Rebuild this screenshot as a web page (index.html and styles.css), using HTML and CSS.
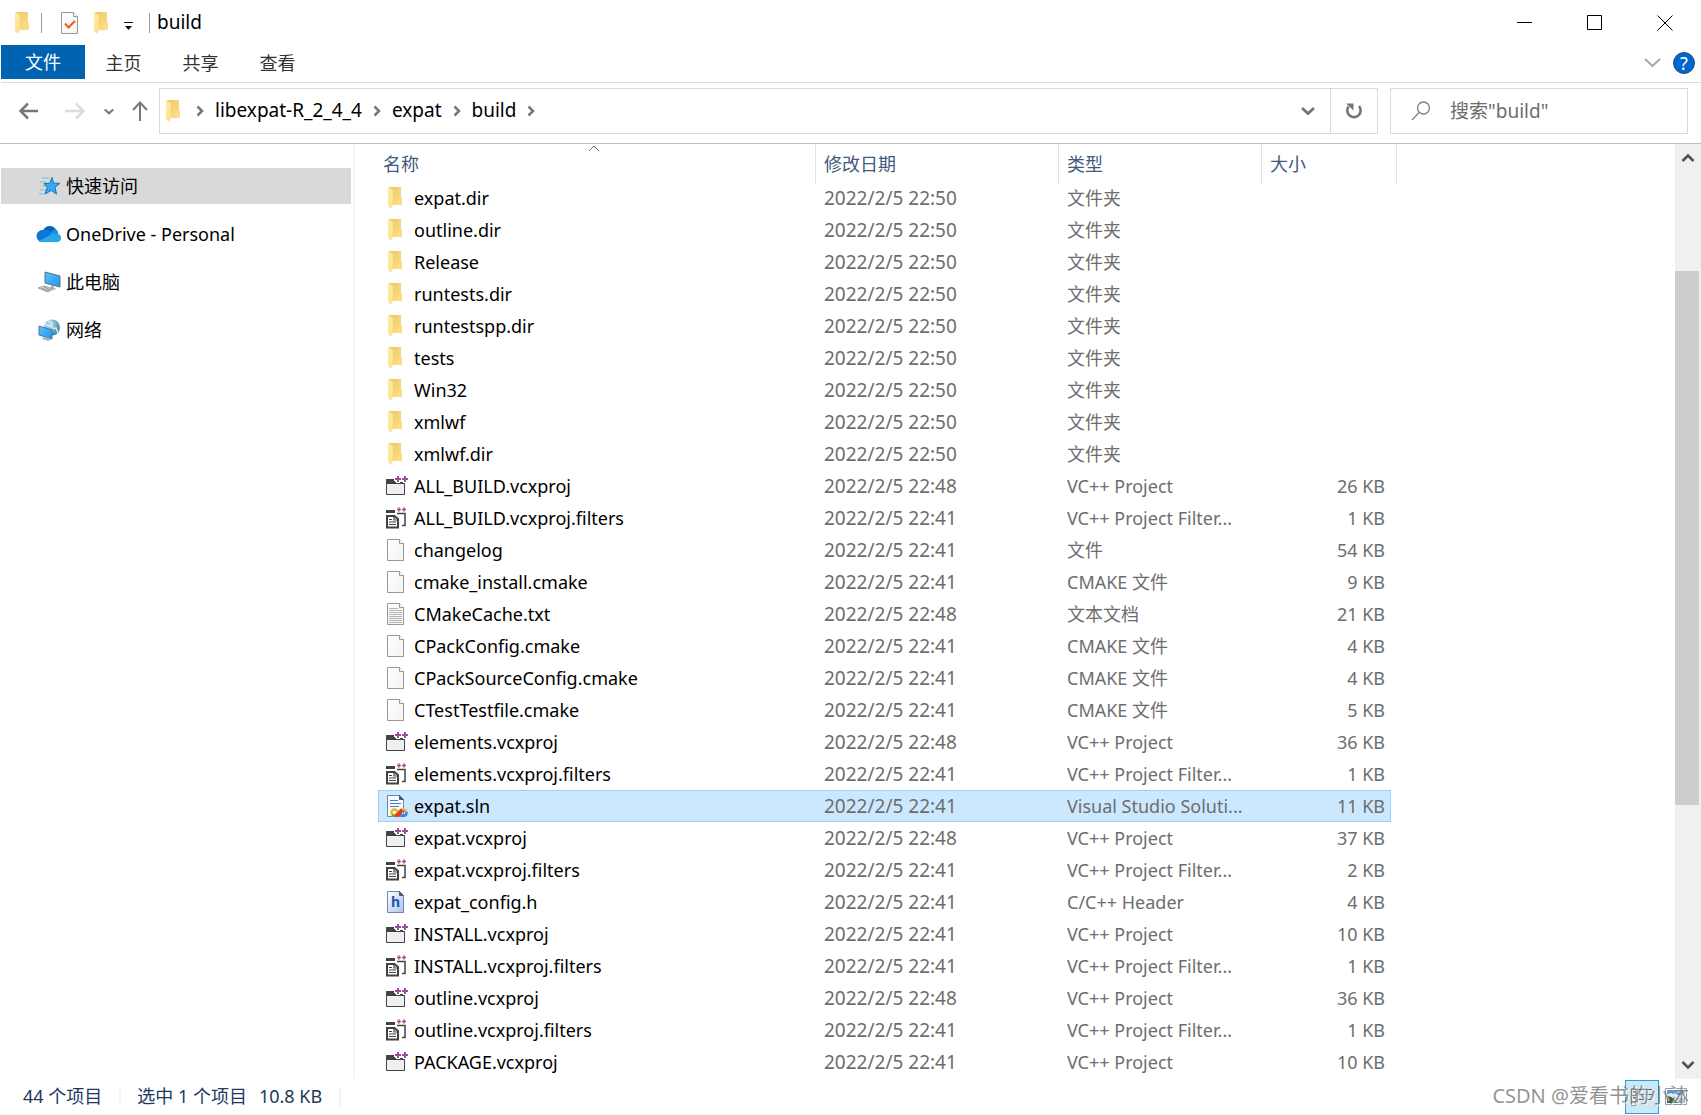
FILE: index.html
```html
<!DOCTYPE html>
<html lang="zh-CN">
<head>
<meta charset="utf-8">
<title>build</title>
<link rel="stylesheet" href="styles.css">
</head>
<body>
<svg class="sprite" aria-hidden="true">
  <defs>
    <linearGradient id="gFolder" x1="0" y1="0" x2="1" y2="1"><stop offset="0" stop-color="#ecc765"/><stop offset="1" stop-color="#ffe08a"/></linearGradient>
    <linearGradient id="gFlap" x1="0" y1="0" x2="1" y2="1"><stop offset="0" stop-color="#ffeaa8"/><stop offset="1" stop-color="#ffdf85"/></linearGradient>
    <linearGradient id="gPage" x1="0" y1="0" x2="1" y2="1"><stop offset="0" stop-color="#ffffff"/><stop offset="1" stop-color="#f1f3f5"/></linearGradient>
    <linearGradient id="gHead" x1="0" y1="0" x2="1" y2="1"><stop offset="0" stop-color="#ffffff"/><stop offset="1" stop-color="#a9c3ee"/></linearGradient>
    <linearGradient id="gScreen" x1="0" y1="0" x2="1" y2="1"><stop offset="0" stop-color="#5bc0ff"/><stop offset="1" stop-color="#1e9af0"/></linearGradient>
    <radialGradient id="gGlobe" cx=".35" cy=".3" r=".8"><stop offset="0" stop-color="#c4e2ee"/><stop offset="1" stop-color="#2b7ea5"/></radialGradient>
  </defs>
  <symbol id="folder" viewBox="0 0 22 22"><path d="M3 0h12v10l1 1v7H3z" fill="url(#gFolder)"/><path d="M2 0l5 3v15l-2 4-3-3z" fill="url(#gFlap)"/></symbol>
  <symbol id="vcx" viewBox="0 0 22 22"><path d="M.5 8.500h18v11H.5z" fill="#efeff2" stroke="#424242"/><path d="M0 4h9v3h10v2H0z" fill="#424242"/><path d="M8 2h2V0h4v2h1V0h7v6h-1v2h-4V6h-3v2h-4V6H8z" fill="#fff"/><path d="M9 3h2V1h2v2h2v2h-2v2h-2V5H9zM16 3h2V1h2v2h2v2h-2v2h-2V5h-2z" fill="#9b4f96"/></symbol>
  <symbol id="vcf" viewBox="0 0 22 22"><path d="M0 3h9v3H0z" fill="#424242"/><path d="M16 18.500h3V6.500h-8" fill="none" stroke="#424242" stroke-width="1.500"/><path d="M1 9h7.500L12 12v8.500H1z" fill="#fff" stroke="#424242" stroke-width="2"/><path d="M8 9v4h4M3 12.500h3M3 15h7M3 17.500h7" fill="none" stroke="#424242" stroke-width="1.200"/><path d="M11 2.500h4M13 .5v4M16 2.500h4M18 .5v4" stroke="#9b4f96" stroke-width="1.500"/></symbol>
  <symbol id="doc" viewBox="0 0 22 22"><path d="M1.500.5h12l4 4v17h-16z" fill="url(#gPage)" stroke="#979797"/><path d="M13.500.5v4h4" fill="#fff" stroke="#979797"/></symbol>
  <symbol id="txt" viewBox="0 0 22 22"><use href="#doc"/><path d="M3 5.500h9M3 7.500h13M3 9.500h13M3 11.500h13M3 13.500h13M3 15.500h13M3 17.500h13M3 19.500h13" stroke="#b4b4b4"/></symbol>
  <symbol id="hdr" viewBox="0 0 22 22"><path d="M1.500.5h12l4 4v17h-16z" fill="url(#gHead)" stroke="#6f87ad"/><path d="M13.500.5v4h4z" fill="#43597d" stroke="#43597d"/></symbol>
  <symbol id="sln" viewBox="0 0 22 22"><path d="M1.500.5h12l4 4v17h-16z" fill="#f4f8ff" stroke="#6f87ad"/><path d="M13.500.5v4h4z" fill="#43597d" stroke="#43597d"/><path d="M4 5.500h8M4 8.500h11M4 11.500h9" stroke="#4d7ec8"/><circle cx="8.500" cy="17.500" r="3" fill="none" stroke="#f2b01e" stroke-width="2.500"/><circle cx="17.500" cy="18" r="3" fill="none" stroke="#3c7be0" stroke-width="2.500"/><path d="M6.500 19.500q2 3 5 1" fill="none" stroke="#5aa02c" stroke-width="2"/><path d="M16 15q3-2 5 2" fill="none" stroke="#f6c32c" stroke-width="2"/><path d="M9.500 21q3-1 4-3t3-3" fill="none" stroke="#e2401b" stroke-width="4"/></symbol>
  <symbol id="crumb" viewBox="0 0 8 12"><path d="M1.500 1.500L6 6l-4.500 4.500" fill="none" stroke="#777" stroke-width="2.500"/></symbol>
  <symbol id="down" viewBox="0 0 14 10"><path d="M1 2l6 5.500L13 2" fill="none" stroke="currentColor" stroke-width="3"/></symbol>
</svg>

<header class="titlebar">
  <svg class="icon"><use href="#folder"/></svg>
  <span class="bar"></span>
  <button class="quick" aria-label="属性"><svg class="icon" viewBox="0 0 22 22"><use href="#doc"/><path d="M5 11.500l3.500 4L15 9" fill="none" stroke="#f25b12" stroke-width="2"/></svg></button>
  <button class="quick" aria-label="新建文件夹"><svg class="icon"><use href="#folder"/></svg></button>
  <button class="quick" aria-label="自定义快速访问工具栏"><svg width="10" height="22" viewBox="0 0 10 22"><path d="M0 10.500h9" stroke="#111"/><path d="M1 14h7l-3.500 4z" fill="#111"/></svg></button>
  <span class="bar bar-title"></span>
  <h1>build</h1>
  <div class="window-buttons">
    <button aria-label="最小化"><svg width="16" height="16"><path d="M0 7.500h15" stroke="#000"/></svg></button>
    <button aria-label="最大化"><svg width="16" height="16"><path d="M.5.5h14v14H.5z" fill="none" stroke="#000"/></svg></button>
    <button aria-label="关闭"><svg width="16" height="16"><path d="M.5.5l15 15M15.500.5l-15 15" stroke="#000"/></svg></button>
  </div>
</header>

<nav class="ribbon">
  <button class="tab tab-file">文件</button>
  <button class="tab">主页</button>
  <button class="tab">共享</button>
  <button class="tab">查看</button>
  <div class="ribbon-end">
    <button aria-label="展开功能区"><svg width="17" height="10"><path d="M1 1l7.500 7L16 1" fill="none" stroke="#a6a6a6" stroke-width="2"/></svg></button>
    <button class="help" aria-label="帮助">?</button>
  </div>
</nav>

<div class="navbar">
  <div class="history">
    <button aria-label="后退"><svg width="20" height="18"><path d="M2 9h17M9 1.500L1.500 9 9 16.500" fill="none" stroke="#777" stroke-width="2.500"/></svg></button>
    <button aria-label="前进"><svg width="20" height="18"><path d="M0 9h18M11 1.500L18.500 9 11 16.500" fill="none" stroke="#dcdcdc" stroke-width="2.500"/></svg></button>
    <button class="recent" aria-label="最近位置"><svg width="10" height="7" viewBox="0 0 14 10"><use href="#down"/></svg></button>
    <button aria-label="上移"><svg width="16" height="20"><path d="M8 20V2M1 9l7-7.500L15 9" fill="none" stroke="#777" stroke-width="2"/></svg></button>
  </div>
  <div class="address">
    <svg class="icon"><use href="#folder"/></svg>
    <svg class="crumb"><use href="#crumb"/></svg><a href="#">libexpat-R_2_4_4</a>
    <svg class="crumb"><use href="#crumb"/></svg><a href="#">expat</a>
    <svg class="crumb"><use href="#crumb"/></svg><a href="#">build</a>
    <svg class="crumb"><use href="#crumb"/></svg>
    <button class="history-drop" aria-label="以前的位置"><svg width="14" height="10"><use href="#down"/></svg></button>
    <button class="refresh" aria-label="刷新"><svg width="18" height="18"><path d="M3.500 4.500A6.700 6.700 0 1 0 14 4" fill="none" stroke="#777" stroke-width="2.600"/><path d="M1 1.500h7.500v7z" fill="#777"/></svg></button>
  </div>
  <label class="search">
    <svg width="20" height="20"><circle cx="12.500" cy="7" r="6" fill="none" stroke="#808080" stroke-width="1.300"/><path d="M8 11.500L1 19" stroke="#808080" stroke-width="1.300"/></svg>
    <input type="text" aria-label="搜索" placeholder='搜索"build"'>
  </label>
</div>

<main class="content">
  <aside class="tree">
    <a class="place selected" href="#"><svg class="place-icon" viewBox="0 0 26 24"><path d="M6 4h7M4 8h6M6 12h5M4 16h6M3 20h5" stroke="#7db9d8"/><path d="M16 3.500l1.600 5.700 6.400.1-5 3.900 1.500 6.800-5.200-3.600L9 20l2.300-6.600L8 9.600l5.800-.4z" fill="#35aaf4" stroke="#1272b4"/></svg>快速访问</a>
    <a class="place" href="#"><svg class="place-icon" viewBox="0 0 26 24"><path d="M7 9a7 7 0 0 1 13-1l-6 6z" fill="#0364b8"/><path d="M6 20A5.500 5.500 0 0 1 7 8q4-1 7 2l7 9z" fill="#0f78d4"/><path d="M14 13q1-6 7-5 2 3 1 5z" fill="#1490df"/><path d="M3 19l11-6q4-3 7-1 4 0 4 4t-4 4H6q-2 0-3-1z" fill="#28a8ea"/></svg>OneDrive - Personal</a>
    <a class="place" href="#"><svg class="place-icon" viewBox="0 0 26 24"><path d="M9 2l15 4v11L9 13z" fill="url(#gScreen)" stroke="#5b7183"/><path d="M15 15l3 1v2l3 1-4 1-4-2 2-1z" fill="#a9b4bc"/><path d="M2 18l6-2 9 3-5 3z" fill="#d5dade" stroke="#9da6ad"/><path d="M5 18l8 3M8 17l7 3" stroke="#8c969e"/></svg>此电脑</a>
    <a class="place" href="#"><svg class="place-icon" viewBox="0 0 26 24"><circle cx="16" cy="9.500" r="8" fill="url(#gGlobe)"/><path d="M12 3q5 0 4 4t4 3l2 5M9 6q3 3 7 2" fill="none" stroke="#d3ebf4" stroke-width="1.500"/><path d="M3 8l13 4v9L3 17z" fill="url(#gScreen)" stroke="#4d7797"/><path d="M8 19l4 1 3 2-3 1-6-2z" fill="#a9b4bc"/></svg>网络</a>
  </aside>

  <section class="files">
    <table>
      <colgroup><col class="c-name"><col class="c-date"><col class="c-type"><col class="c-size"></colgroup>
      <thead><tr><th>名称<svg class="sort" width="12" height="7"><path d="M1 6l5-5 5 5" fill="none" stroke="#707070"/></svg></th><th>修改日期</th><th>类型</th><th>大小</th></tr></thead>
      <tbody>
        <tr><td><svg class="icon"><use href="#folder"/></svg>expat.dir</td><td>2022/2/5 22:50</td><td>文件夹</td><td></td></tr>
        <tr><td><svg class="icon"><use href="#folder"/></svg>outline.dir</td><td>2022/2/5 22:50</td><td>文件夹</td><td></td></tr>
        <tr><td><svg class="icon"><use href="#folder"/></svg>Release</td><td>2022/2/5 22:50</td><td>文件夹</td><td></td></tr>
        <tr><td><svg class="icon"><use href="#folder"/></svg>runtests.dir</td><td>2022/2/5 22:50</td><td>文件夹</td><td></td></tr>
        <tr><td><svg class="icon"><use href="#folder"/></svg>runtestspp.dir</td><td>2022/2/5 22:50</td><td>文件夹</td><td></td></tr>
        <tr><td><svg class="icon"><use href="#folder"/></svg>tests</td><td>2022/2/5 22:50</td><td>文件夹</td><td></td></tr>
        <tr><td><svg class="icon"><use href="#folder"/></svg>Win32</td><td>2022/2/5 22:50</td><td>文件夹</td><td></td></tr>
        <tr><td><svg class="icon"><use href="#folder"/></svg>xmlwf</td><td>2022/2/5 22:50</td><td>文件夹</td><td></td></tr>
        <tr><td><svg class="icon"><use href="#folder"/></svg>xmlwf.dir</td><td>2022/2/5 22:50</td><td>文件夹</td><td></td></tr>
        <tr><td><svg class="icon"><use href="#vcx"/></svg>ALL_BUILD.vcxproj</td><td>2022/2/5 22:48</td><td>VC++ Project</td><td>26 KB</td></tr>
        <tr><td><svg class="icon"><use href="#vcf"/></svg>ALL_BUILD.vcxproj.filters</td><td>2022/2/5 22:41</td><td>VC++ Project Filter...</td><td>1 KB</td></tr>
        <tr><td><svg class="icon"><use href="#doc"/></svg>changelog</td><td>2022/2/5 22:41</td><td>文件</td><td>54 KB</td></tr>
        <tr><td><svg class="icon"><use href="#doc"/></svg>cmake_install.cmake</td><td>2022/2/5 22:41</td><td>CMAKE 文件</td><td>9 KB</td></tr>
        <tr><td><svg class="icon"><use href="#txt"/></svg>CMakeCache.txt</td><td>2022/2/5 22:48</td><td>文本文档</td><td>21 KB</td></tr>
        <tr><td><svg class="icon"><use href="#doc"/></svg>CPackConfig.cmake</td><td>2022/2/5 22:41</td><td>CMAKE 文件</td><td>4 KB</td></tr>
        <tr><td><svg class="icon"><use href="#doc"/></svg>CPackSourceConfig.cmake</td><td>2022/2/5 22:41</td><td>CMAKE 文件</td><td>4 KB</td></tr>
        <tr><td><svg class="icon"><use href="#doc"/></svg>CTestTestfile.cmake</td><td>2022/2/5 22:41</td><td>CMAKE 文件</td><td>5 KB</td></tr>
        <tr><td><svg class="icon"><use href="#vcx"/></svg>elements.vcxproj</td><td>2022/2/5 22:48</td><td>VC++ Project</td><td>36 KB</td></tr>
        <tr><td><svg class="icon"><use href="#vcf"/></svg>elements.vcxproj.filters</td><td>2022/2/5 22:41</td><td>VC++ Project Filter...</td><td>1 KB</td></tr>
        <tr class="selected"><td><svg class="icon"><use href="#sln"/></svg>expat.sln</td><td>2022/2/5 22:41</td><td>Visual Studio Soluti...</td><td>11 KB</td></tr>
        <tr><td><svg class="icon"><use href="#vcx"/></svg>expat.vcxproj</td><td>2022/2/5 22:48</td><td>VC++ Project</td><td>37 KB</td></tr>
        <tr><td><svg class="icon"><use href="#vcf"/></svg>expat.vcxproj.filters</td><td>2022/2/5 22:41</td><td>VC++ Project Filter...</td><td>2 KB</td></tr>
        <tr><td><svg class="icon" viewBox="0 0 22 22"><use href="#hdr"/><text x="5" y="16" class="glyph-h">h</text></svg>expat_config.h</td><td>2022/2/5 22:41</td><td>C/C++ Header</td><td>4 KB</td></tr>
        <tr><td><svg class="icon"><use href="#vcx"/></svg>INSTALL.vcxproj</td><td>2022/2/5 22:41</td><td>VC++ Project</td><td>10 KB</td></tr>
        <tr><td><svg class="icon"><use href="#vcf"/></svg>INSTALL.vcxproj.filters</td><td>2022/2/5 22:41</td><td>VC++ Project Filter...</td><td>1 KB</td></tr>
        <tr><td><svg class="icon"><use href="#vcx"/></svg>outline.vcxproj</td><td>2022/2/5 22:48</td><td>VC++ Project</td><td>36 KB</td></tr>
        <tr><td><svg class="icon"><use href="#vcf"/></svg>outline.vcxproj.filters</td><td>2022/2/5 22:41</td><td>VC++ Project Filter...</td><td>1 KB</td></tr>
        <tr><td><svg class="icon"><use href="#vcx"/></svg>PACKAGE.vcxproj</td><td>2022/2/5 22:41</td><td>VC++ Project</td><td>10 KB</td></tr>
      </tbody>
    </table>
  </section>

  <div class="scrollbar">
    <button aria-label="向上滚动"><svg width="14" height="10"><path d="M1.500 8L7 2.500 12.500 8" fill="none" stroke="#505050" stroke-width="2.500"/></svg></button>
    <div class="track"><div class="thumb"></div></div>
    <button aria-label="向下滚动"><svg width="14" height="10"><path d="M1.500 2L7 7.500 12.500 2" fill="none" stroke="#505050" stroke-width="2.500"/></svg></button>
  </div>
</main>

<footer class="status">
  <span class="cell">44 个项目</span>
  <span class="cell"><span>选中 1 个项目</span><span>10.8 KB</span></span>
  <div class="views">
    <button class="view active" aria-label="详细信息"><svg width="22" height="20"><path d="M.5 1.500h4v17h-4z" fill="#fff" stroke="#999"/><path d="M2 4.500h2" stroke="#3a8a4a" stroke-width="2"/><path d="M2 10.500h2" stroke="#d02a1c" stroke-width="2"/><path d="M2 15.500h2" stroke="#d07a1c" stroke-width="2"/><path d="M7 2.500h6M15 2.500h6M7 7.500h6M15 7.500h6M7 12.500h6M15 12.500h6" stroke="#666"/></svg></button>
    <button class="view" aria-label="大图标"><svg width="22" height="18"><path d="M.5.500h21v16H.5z" fill="#fff" stroke="#999"/><path d="M2 2h18v7H2z" fill="#5d9be8"/><path d="M2 7q5-4 9-1t9-1v5H2z" fill="#dcebf8"/><path d="M2 8q4 0 8 4l4 3H2z" fill="#35573f"/><path d="M10 10h10v5h-6z" fill="#8fb2cd"/></svg></button>
    <span class="watermark">CSDN @爱看书的小沐</span>
  </div>
</footer>
</body>
</html>
```
FILE: styles.css
```css
* { box-sizing: border-box; }

body {
  margin: 0;
  min-height: 100vh;
  display: flex;
  flex-direction: column;
  background: #fff;
  color: #000;
  font: 18px/24px "Noto Sans", "Noto Sans CJK SC", sans-serif;
}

button {
  display: inline-flex;
  align-items: center;
  justify-content: center;
  margin: 0;
  padding: 0;
  border: 0;
  background: none;
  color: inherit;
  font: inherit;
}

a { color: inherit; text-decoration: none; }
svg { display: block; flex: none; }
.sprite { position: absolute; width: 0; height: 0; }
.icon { width: 22px; height: 22px; }
.glyph-h { font: bold 14px "Noto Sans", sans-serif; fill: #1b56b4; }

/* Title bar */
.titlebar {
  display: flex;
  align-items: center;
  height: 45px;
  padding-left: 13px;
}
.titlebar h1 { margin: 0; padding-bottom: 2px; font-size: 19px; font-weight: 400; }
.bar { width: 1px; height: 20px; margin: 0 18px 0 6px; background: #999; }
.bar-title { margin: 0 7px 0 15px; }
.quick { margin-right: 10px; }
.quick:nth-of-type(3) { margin-right: 0; }
.window-buttons { display: flex; margin-left: auto; padding-right: 1px; }
.window-buttons button { width: 70px; height: 45px; }

/* Ribbon */
.ribbon {
  display: flex;
  height: 38px;
  margin-left: 1px;
  border-bottom: 1px solid #dadbdc;
}
.tab { width: 77px; height: 36px; color: #333; }
.tab-file { width: 84px; height: 34px; background: #0063b1; color: #fff; }
.ribbon-end {
  display: flex;
  align-items: center;
  gap: 12px;
  height: 36px;
  margin-left: auto;
  padding-right: 6px;
}
.help {
  width: 22px;
  height: 22px;
  border: 1px solid #15528c;
  border-radius: 50%;
  background: #0066cc;
  color: #fff;
  font-size: 18px;
  line-height: 20px;
}

/* Navigation */
.navbar {
  display: flex;
  height: 61px;
  padding: 5px 13px 9px 0;
  border-bottom: 1px solid #bdbdbd;
}
.history { display: flex; flex: none; width: 159px; padding-left: 19px; color: #777; }
.history button { margin-right: 26px; }
.history button:nth-child(2) { margin-right: 19px; }
.history .recent { margin-right: 18px; }
.history button:last-child { margin-right: 0; }
.address {
  display: flex;
  flex: 1;
  align-items: center;
  border: 1px solid #d9d9d9;
  padding-left: 4px;
  font-size: 19px;
}
.address a { margin: 0 11px 2px; }
.crumb { width: 8px; height: 12px; }
.address .icon { margin: 0 10px 0 0; }
.history-drop { width: 45px; height: 44px; margin-left: auto; color: #777; }
.refresh { width: 47px; height: 44px; border-left: 1px solid #d9d9d9; }
.search {
  display: flex;
  align-items: center;
  width: 298px;
  margin-left: 12px;
  padding-left: 20px;
  border: 1px solid #d9d9d9;
}
.search input {
  flex: 1;
  min-width: 0;
  margin-left: 19px;
  padding: 0;
  border: 0;
  outline: 0;
  font: inherit;
  font-size: 19px;
}
.search input::placeholder { color: #6d6d6d; opacity: 1; }

/* Content */
.content { display: flex; flex: 1; }
.tree {
  display: flex;
  flex: none;
  flex-direction: column;
  gap: 12px;
  width: 355px;
  padding: 24px 2px 0 1px;
  border-right: 2px solid #f5f5f5;
}
.place { display: flex; align-items: center; height: 36px; padding-left: 35px; }
.place.selected { background: #d9d9d9; }
.place-icon { width: 26px; height: 24px; margin-right: 4px; }

.files { flex: 1; padding-left: 23px; }
table { width: 1013px; table-layout: fixed; border-collapse: collapse; }
.c-name { width: 438px; }
.c-date { width: 243px; }
.c-type { width: 203px; }
th {
  position: relative;
  height: 38px;
  padding: 2px 8px 0;
  color: #43597d;
  font-weight: 400;
  text-align: left;
}
th:first-child { padding-left: 5px; }
th::after {
  position: absolute;
  top: 0;
  right: 0;
  width: 1px;
  height: 40px;
  background: #e2e2e2;
  content: "";
}
th:last-child::after { right: -6px; }
.sort { position: absolute; top: 1px; left: 210px; }
td {
  height: 32px;
  padding: 0 8px;
  color: #6d6d6d;
  white-space: nowrap;
}
td:first-child { color: #000; }
td:nth-child(2) { font-size: 19px; }
td:last-child { padding-right: 6px; text-align: right; }
td .icon { display: inline-block; margin-right: 6px; vertical-align: -4px; }
tr.selected { background: #cce8ff; outline: 1px solid #99d1ff; outline-offset: -1px; }

/* Scroll bar */
.scrollbar {
  display: flex;
  flex: none;
  flex-direction: column;
  width: 26px;
  padding-right: 1px;
  background: #f0f0f0;
}
.scrollbar button { height: 28px; }
.track { display: grid; flex: 1; grid-template-rows: 99fr 534fr 246fr; }
.thumb { grid-row: 2; margin-right: 1px; background: #cdcdcd; }

/* Status bar */
.status {
  display: flex;
  align-items: center;
  height: 36px;
  padding-left: 23px;
  color: #1e395b;
}
.cell {
  display: flex;
  gap: 12px;
  height: 18px;
  margin-right: 16px;
  padding-right: 17px;
  border-right: 2px solid #f3f3f3;
  line-height: 16px;
}
.views { position: relative; display: flex; gap: 6px; margin-left: auto; padding-right: 14px; }
.view { height: 34px; }
.view.active { width: 34px; border: 1px solid #26a0da; background: #cce8f6; }
.watermark {
  position: absolute;
  right: 12px;
  top: 4px;
  color: rgba(110, 110, 110, .75);
  font-size: 20px;
  text-shadow: 1px 1px 0 rgba(255, 255, 255, .7);
  white-space: nowrap;
}
```
